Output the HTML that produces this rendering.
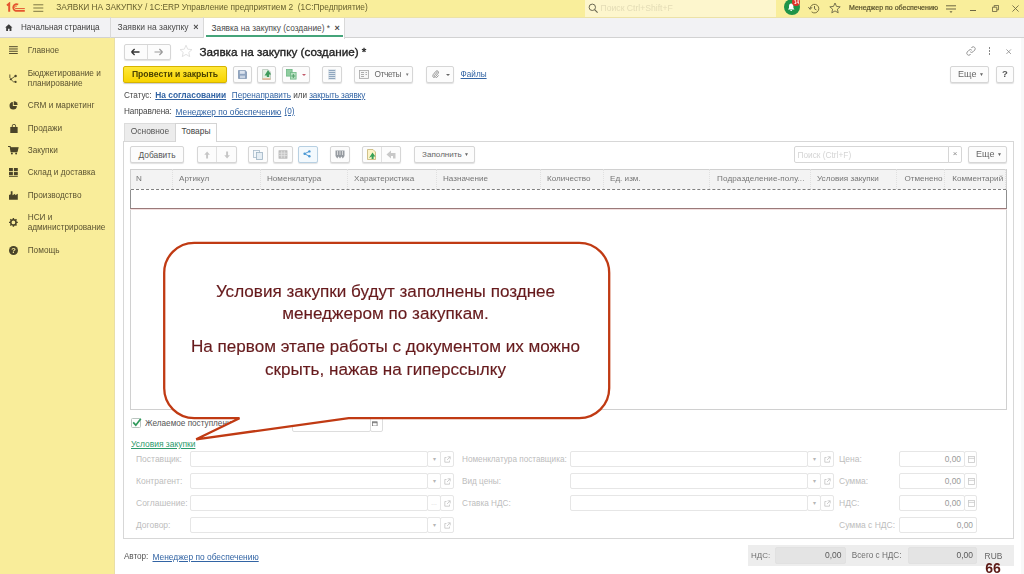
<!DOCTYPE html>
<html lang="ru">
<head>
<meta charset="utf-8">
<title>Заявка на закупку</title>
<style>
*{box-sizing:border-box;margin:0;padding:0}
html,body{width:1024px;height:574px;overflow:hidden;background:#fff}
body{font-family:"Liberation Sans",sans-serif;font-size:8.5px;color:#444;position:relative}
#ui{position:absolute;left:0;top:0;width:1024px;height:574px;filter:blur(0.45px)}
.a{position:absolute;white-space:nowrap;line-height:1}
.lnk{color:#3264a4;text-decoration:underline;text-underline-offset:0.6px;text-decoration-thickness:0.9px}
/* top bars */
#titlebar{left:0;top:0;width:1024px;height:17px;background:#f9ee9b}
#tabbar{left:0;top:17px;width:1024px;height:21.4px;background:#f2f2f4;border-bottom:1.3px solid #d2d2d2;border-top:1px solid #ece2a8}
#sidebar{left:0;top:38px;width:115px;height:536px;background:#f9ed9a}
#sideedge{left:114px;top:38px;width:1.3px;height:536px;background:#e9dfa6}
.sb{left:27.7px;color:#5b5331;font-size:8.25px;line-height:10.6px}
.tab{top:17px;height:21px;border-right:1px solid #d9d9d9;font-size:8.5px;color:#4a4a4a;line-height:21px}
.btn{border:1px solid #d6d6d6;border-radius:2px;background:#fcfcfc;box-shadow:0 1px 1px rgba(0,0,0,.12);height:16px;font-size:8.5px;color:#444;line-height:14px;text-align:center}
.fld{border:1px solid #e6e6e6;border-radius:2px;background:#fff;height:16px}
.dl{color:#bdbdbd;font-size:8.5px}
.th{top:169px;height:20px;line-height:20.5px;font-size:8.1px;color:#757575;padding-left:4px;border-right:1px dotted #e0e0e0}
</style>
</head>
<body>
<div id="ui">
<!-- TITLE BAR -->
<div class="a" id="titlebar"></div>
<div class="a" id="tabbar"></div>
<div class="a" id="sidebar"></div>
<div class="a" id="sideedge"></div>
<div class="a" style="left:1020.5px;top:38px;width:4px;height:536px;background:#f8f8f8"></div>
<!-- titlebar content -->
<svg class="a" style="left:6px;top:2px" width="20" height="11" viewBox="0 0 20 11"><g fill="none" stroke="#e4552f"><path d="M1 3.4L3.2 1.6V9.8" stroke-width="2"/><path d="M12.2 2.6A3.4 3.4 0 1 0 9.8 8.9H18.8" stroke-width="1.7"/><path d="M11 4.6A1.3 1.3 0 1 0 9.8 6.6H18.8" stroke-width="1"/></g></svg>
<svg class="a" style="left:33px;top:4px" width="11" height="9" viewBox="0 0 11 9"><g stroke="#7d7644" stroke-width="1"><path d="M0.3 0.8H10.3M0.3 4H10.3M0.3 7.3H10.3"/></g></svg>
<div class="a" style="left:56.2px;top:3.1px;font-size:8.35px;color:#68612f">ЗАЯВКИ НА ЗАКУПКУ / 1С:ERP Управление предприятием 2&nbsp; (1С:Предприятие)</div>
<div class="a" style="left:585px;top:0;width:191px;height:17px;background:#fdf6cd"></div>
<svg class="a" style="left:588px;top:3px" width="11" height="11" viewBox="0 0 11 11"><circle cx="4.3" cy="4.3" r="3.2" fill="none" stroke="#6a6752" stroke-width="1"/><path d="M6.6 6.6L9.6 9.6" stroke="#6a6752" stroke-width="1.2"/></svg>
<div class="a" style="left:600.5px;top:4.2px;font-size:8.65px;color:#e3dcb6">Поиск Ctrl+Shift+F</div>
<div class="a" style="left:783.6px;top:-1.2px;width:16.4px;height:16.4px;border-radius:8.2px;background:#1f9448"></div>
<svg class="a" style="left:787.2px;top:3.4px" width="8.4" height="8.6" viewBox="0 0 10 11"><path d="M5 0.5C3 0.5 2.2 2.2 2.2 4V6.4L0.8 8.2H9.2L7.8 6.4V4C7.8 2.2 7 0.5 5 0.5Z M3.8 9H6.2A1.2 1.2 0 0 1 3.8 9Z" fill="#fff"/></svg>
<div class="a" style="left:792.3px;top:-2.4px;width:8.2px;height:8.2px;border-radius:4.1px;background:#e2332c;color:#fff;font-size:4.5px;line-height:9px;text-align:center;font-weight:bold">14</div>
<svg class="a" style="left:808.3px;top:2.6px" width="12" height="11" viewBox="0 0 12 11"><path d="M2.2 5.5A4.3 4.3 0 1 1 3.6 8.8" fill="none" stroke="#7d7542" stroke-width="1"/><path d="M0.4 4.2L2.2 6.4L4 4.2" fill="none" stroke="#6b6647" stroke-width="1"/><path d="M6.5 3V5.8L8.4 6.9" fill="none" stroke="#6b6647" stroke-width="1"/></svg>
<svg class="a" style="left:829px;top:2px" width="12" height="12" viewBox="0 0 12 12"><path d="M6 1L7.5 4.4L11.2 4.8L8.4 7.2L9.2 10.8L6 8.9L2.8 10.8L3.6 7.2L0.8 4.8L4.5 4.4Z" fill="none" stroke="#6b6647" stroke-width="0.9"/></svg>
<div class="a" style="left:848.5px;top:3.9px;font-size:7.6px;color:#544d28;-webkit-text-stroke:0.2px #544d28;transform:scaleX(0.925);transform-origin:0 0">Менеджер по обеспечению</div>
<svg class="a" style="left:945.5px;top:5px" width="11" height="9" viewBox="0 0 11 9"><g stroke="#6d6744" stroke-width="1"><path d="M0 0.8H10M0 4H10"/></g><path d="M3.5 6.3H6.5L5 8Z" fill="#6d6744"/></svg>
<div class="a" style="left:970px;top:10px;width:6px;height:1px;background:#6d6744"></div>
<svg class="a" style="left:991.5px;top:4.5px" width="7" height="7" viewBox="0 0 8 8"><path d="M0.5 2.5H5.5V7.5H0.5Z M2.5 2.5V0.5H7.5V5.5H5.5" fill="none" stroke="#6d6744" stroke-width="1"/></svg>
<svg class="a" style="left:1012px;top:4.5px" width="7" height="7" viewBox="0 0 8 8"><path d="M0.5 0.5L7.5 7.5M7.5 0.5L0.5 7.5" stroke="#6d6744" stroke-width="1"/></svg>

<!-- tabs -->
<div class="a tab" style="left:0;width:111px;padding-left:21px;font-size:8.15px;color:#404040;top:17.4px">Начальная страница</div>
<svg class="a" style="left:5.3px;top:23.5px" width="7.6" height="7.3" viewBox="0 0 9 9" preserveAspectRatio="none"><path d="M4.5 0.3L0.2 4.4H1.4V8.6H3.6V5.8H5.4V8.6H7.6V4.4H8.8Z" fill="#3c3c3c"/></svg>
<div class="a tab" style="left:110px;width:94px;padding-left:7.5px">Заявки на закупку &nbsp;<b style="font-size:9px">×</b></div>
<div class="a tab" style="left:204px;width:140.5px;padding-left:7.5px;background:#fff;height:21.4px;line-height:21px;font-size:8.3px;top:17.6px">Заявка на закупку (создание) * &nbsp;<b style="font-size:9px">×</b></div><div class="a" style="left:206px;top:35px;width:137px;height:1.7px;background:#45a47a"></div>

<!-- sidebar items -->
<svg class="a" style="left:9.2px;top:46.3px" width="8.8" height="7.9" viewBox="0 0 10 9"><path d="M0 0.8H10M0 3.4H10M0 6H10M0 8.6H10" stroke="#4a4429" stroke-width="1.1"/></svg>
<div class="a sb" style="top:46.2px">Главное</div>
<svg class="a" style="left:9.3px;top:73.5px" width="9.7" height="9.7" viewBox="0 0 11 11"><g fill="#4a4429"><circle cx="7.5" cy="2.2" r="1.4"/><circle cx="2" cy="6" r="1.2"/><circle cx="7.5" cy="9" r="1.2"/><rect x="0.5" y="0.5" width="1" height="4"/></g><path d="M2 6L7.5 2.2M2 6L5 8.8H7.5" stroke="#4a4429" stroke-width="0.9" fill="none"/></svg>
<div class="a sb" style="top:68.7px">Бюджетирование и<br>планирование</div>
<svg class="a" style="left:9.2px;top:101.2px" width="8.8" height="8.8" viewBox="0 0 10 10"><path d="M4.4 1.2A4.2 4.2 0 1 0 9 5.6H4.4Z" fill="#4a4429"/><path d="M5.4 0.2A4.2 4.2 0 0 1 9.8 4.6H5.4Z" fill="#4a4429"/></svg>
<div class="a sb" style="top:100.9px">CRM и маркетинг</div>
<svg class="a" style="left:10.1px;top:123.5px" width="7.9" height="9.7" viewBox="0 0 9 11"><path d="M0.3 3.4H8.7V10.7H0.3Z" fill="#4a4429"/><path d="M2.6 4.4V2.2A1.9 1.9 0 0 1 6.4 2.2V4.4" fill="none" stroke="#4a4429" stroke-width="1"/></svg>
<div class="a sb" style="top:123.7px">Продажи</div>
<svg class="a" style="left:8.3px;top:146.4px" width="10.6" height="8.8" viewBox="0 0 12 10"><path d="M0 0.6H2.4L3.4 6.4H10.2L11.4 2H3" fill="none" stroke="#4a4429" stroke-width="1.2"/><path d="M3 2H11.4L10.2 6.4H3.6Z" fill="#4a4429"/><circle cx="4.4" cy="8.6" r="1.1" fill="#4a4429"/><circle cx="9.2" cy="8.6" r="1.1" fill="#4a4429"/></svg>
<div class="a sb" style="top:145.7px">Закупки</div>
<svg class="a" style="left:9.2px;top:168.4px" width="8.8" height="8.8" viewBox="0 0 10 10"><g fill="#4a4429"><rect x="0" y="0" width="4.4" height="3.6"/><rect x="5.6" y="0" width="4.4" height="3.6"/><rect x="0" y="4.6" width="4.4" height="3.6"/><rect x="5.6" y="4.6" width="4.4" height="3.6"/><rect x="0" y="9" width="10" height="1"/></g></svg>
<div class="a sb" style="top:168.2px">Склад и доставка</div>
<svg class="a" style="left:9.2px;top:191.4px" width="8.8" height="8.8" viewBox="0 0 10 10"><path d="M0 10V4.6L2 3.6V0.4H4V4.8L7 3V4.8L10 3V10Z" fill="#4a4429"/></svg>
<div class="a sb" style="top:190.7px">Производство</div>
<svg class="a" style="left:9.2px;top:218.4px" width="8.8" height="8.8" viewBox="0 0 10 10"><circle cx="5" cy="5" r="3" fill="none" stroke="#4a4429" stroke-width="1.8"/><g stroke="#4a4429" stroke-width="1.6"><path d="M5 0V2M5 8V10M0 5H2M8 5H10M1.5 1.5L2.8 2.8M7.2 7.2L8.5 8.5M8.5 1.5L7.2 2.8M2.8 7.2L1.5 8.5"/></g></svg>
<div class="a sb" style="top:212.7px">НСИ и<br>администрирование</div>
<div class="a" style="left:9px;top:246.2px;width:9px;height:9px;border-radius:4.5px;background:#4a4429;color:#f9ec9a;font-size:7.5px;font-weight:bold;text-align:center;line-height:9.4px">?</div>
<div class="a sb" style="top:245.7px">Помощь</div>

<!-- form header -->
<div class="a btn" style="left:124px;top:44px;width:47px;height:16px"></div>
<div class="a" style="left:147px;top:45px;width:1px;height:14px;background:#dcdcdc"></div>
<svg class="a" style="left:131px;top:48px" width="9" height="8" viewBox="0 0 9 8"><path d="M0.5 4H8.5M0.5 4L3.6 1M0.5 4L3.6 7" stroke="#333" stroke-width="1.3" fill="none"/></svg>
<svg class="a" style="left:154px;top:48px" width="9" height="8" viewBox="0 0 9 8"><path d="M0.5 4H8.5M8.5 4L5.4 1M8.5 4L5.4 7" stroke="#9a9a9a" stroke-width="1.2" fill="none"/></svg>
<svg class="a" style="left:179px;top:44px" width="14" height="14" viewBox="0 0 14 14"><path d="M7 1.2L8.7 5.2L13 5.6L9.8 8.4L10.7 12.6L7 10.4L3.3 12.6L4.2 8.4L1 5.6L5.3 5.2Z" fill="none" stroke="#dedede" stroke-width="0.9"/></svg>
<div class="a" style="left:199.5px;top:45.6px;font-size:11.7px;color:#222;-webkit-text-stroke:0.35px #222">Заявка на закупку (создание) *</div>
<!-- header right icons -->
<svg class="a" style="left:965.5px;top:46px" width="10" height="10" viewBox="0 0 10 10"><g fill="none" stroke="#8a8a8a" stroke-width="0.9"><path d="M4.2 5.8A2 2 0 0 0 7 5.8L8.8 4A2 2 0 0 0 6 1.2L5.2 2"/><path d="M5.8 4.2A2 2 0 0 0 3 4.2L1.2 6A2 2 0 0 0 4 8.8L4.8 8"/></g></svg>
<div class="a" style="left:988.8px;top:47.2px;width:1.6px;height:1.8px;background:#888;box-shadow:0 3px 0 #888,0 6px 0 #888"></div>
<svg class="a" style="left:1006.3px;top:48.5px" width="5.4" height="5.4" viewBox="0 0 6 6"><path d="M0.5 0.5L5.5 5.5M5.5 0.5L0.5 5.5" stroke="#8a8a8a" stroke-width="0.9"/></svg>
<!-- toolbar -->
<div class="a" style="left:123px;top:66px;width:104px;height:16.5px;border:1px solid #d6b400;border-radius:2px;background:linear-gradient(#ffe83a,#f8d400);box-shadow:0 1px 1px rgba(0,0,0,.2);font-size:8.6px;font-weight:bold;color:#4a4200;text-align:center;line-height:14.5px">Провести и закрыть</div>
<div class="a btn" style="left:233px;top:66px;width:19px;height:16.5px"></div>
<svg class="a" style="left:238px;top:70px" width="9" height="9" viewBox="0 0 9 9"><path d="M0.5 0.5H7.2L8.5 1.8V8.5H0.5Z" fill="#8fa4c0" stroke="#8296b2" stroke-width="0.8"/><rect x="1.8" y="0.8" width="5" height="3" fill="#dbe3ee"/><rect x="2" y="5.6" width="5" height="2.6" fill="#c9d4e3"/></svg>
<div class="a btn" style="left:257px;top:66px;width:19px;height:16.5px"></div>
<svg class="a" style="left:261px;top:69px" width="11" height="11" viewBox="0 0 11 11"><path d="M1.5 0.5H7L9.5 3V10.5H1.5Z" fill="#e2f0e2" stroke="#b9c9bd" stroke-width="0.8"/><path d="M1.5 9.4H9.5V10.5H1.5Z" fill="#eea57a"/><path d="M3.6 6.4L7 1L10.2 5.4H8.2V8H5.8V6.4Z" fill="#3f9b5c"/></svg>
<div class="a btn" style="left:282px;top:66px;width:28px;height:16.5px"></div>
<svg class="a" style="left:286px;top:69px" width="12" height="11" viewBox="0 0 12 11"><rect x="0.5" y="0.5" width="5.6" height="6.6" fill="#8fcc9f" stroke="#6db884" stroke-width="0.8"/><rect x="4.5" y="3.5" width="5.6" height="6.6" fill="#b5dfbf" stroke="#6db884" stroke-width="0.8"/><path d="M7.3 5V9M5.3 7H9.3" stroke="#4f9f68" stroke-width="1"/></svg>
<div class="a" style="left:302px;top:74px;border:2px solid transparent;border-top:2.2px solid #c25a6a;width:0;height:0"></div>
<div class="a btn" style="left:322px;top:66px;width:20px;height:16.5px"></div>
<svg class="a" style="left:328px;top:69px" width="8" height="11" viewBox="0 0 8 11"><rect x="0.5" y="0.5" width="7" height="10" fill="#f4f7fa" stroke="#dfe5ea" stroke-width="0.8"/><path d="M0.8 1.6H7.2M0.8 3.6H7.2M0.8 5.6H7.2M0.8 7.6H7.2M0.8 9.5H7.2" stroke="#8fa6be" stroke-width="1.1"/></svg>
<div class="a btn" style="left:354px;top:66px;width:59px;height:16.5px;text-align:left;padding-left:19.5px;color:#666;line-height:14.5px;font-size:8.3px;letter-spacing:-0.35px">Отчеты&nbsp; <span style="font-size:4.5px;position:relative;top:-1px;color:#777">▼</span></div>
<svg class="a" style="left:359px;top:70px" width="10" height="9" viewBox="0 0 10 9"><rect x="0.5" y="0.5" width="9" height="8" fill="#f6f6f6" stroke="#a5a5a5" stroke-width="0.8"/><path d="M2 2.5H5M2 4.5H5M2 6.5H5M6.5 2.5H8M6.5 4.5H8" stroke="#999" stroke-width="0.8"/></svg>
<div class="a btn" style="left:426px;top:66px;width:28px;height:16.5px"></div>
<svg class="a" style="left:432px;top:69.8px" width="7.2" height="8.4" viewBox="0 0 9 11"><path d="M6.8 2.6L3 7.2A1 1 0 0 0 4.6 8.4L8 4.2A2 2 0 0 0 5 1.6L1.4 6A3 3 0 0 0 6 9.8L8.4 7" fill="none" stroke="#8d8d8d" stroke-width="1.2"/></svg>
<div class="a" style="left:445.5px;top:74px;border:2px solid transparent;border-top:2.4px solid #666;width:0;height:0"></div>
<div class="a lnk" style="left:460.6px;top:70.8px;font-size:8.2px">Файлы</div>
<div class="a btn" style="left:949.5px;top:66px;width:39px;height:16.5px;line-height:14.5px;font-size:9px;color:#666;padding-left:4px">Еще <span style="font-size:5px;position:relative;top:-1px;color:#666">▼</span></div>
<div class="a btn" style="left:996px;top:66px;width:18px;height:16.5px;line-height:14.5px;font-size:9.5px;font-weight:bold;color:#555">?</div>
<!-- status rows -->
<div class="a" style="left:124px;top:91.5px;font-size:8.2px;color:#484848;letter-spacing:-0.1px">Статус:</div>
<div class="a lnk" style="left:155.2px;top:91.3px;font-size:8.4px;font-weight:bold">На согласовании</div>
<div class="a lnk" style="left:231.8px;top:91.5px;font-size:8.2px">Перенаправить</div>
<div class="a" style="left:293.2px;top:91.5px;font-size:8.2px;color:#484848">или</div>
<div class="a lnk" style="left:309.2px;top:91.5px;font-size:8.2px;letter-spacing:-0.1px">закрыть заявку</div>
<div class="a" style="left:124px;top:108.2px;font-size:8.2px;color:#484848;letter-spacing:-0.1px">Направлена:</div>
<div class="a lnk" style="left:175.5px;top:108.2px;font-size:8.35px">Менеджер по обеспечению</div>
<div class="a lnk" style="left:284.6px;top:108.2px;font-size:8.2px">(0)</div>
<!-- panel -->
<div class="a" style="left:124px;top:123.2px;width:52px;height:18.6px;background:#ececec;border:1px solid #dcdcdc;font-size:8.4px;color:#555;text-align:center;line-height:15.6px">Основное</div>
<div class="a" style="left:123px;top:141px;width:891px;height:398px;border:1px solid #d7d7d7;background:#fff"></div>
<div class="a" style="left:175px;top:123.2px;width:42px;height:18.8px;background:#fff;border:1px solid #d4d4d4;border-bottom:none;font-size:8.4px;color:#444;text-align:center;line-height:15.6px">Товары</div>
<!-- table toolbar -->
<div class="a btn" style="left:130px;top:146px;width:54px;height:17px;line-height:16.6px;font-size:8.4px;color:#555">Добавить</div>
<div class="a btn" style="left:197px;top:146px;width:40px;height:17px"></div>
<div class="a" style="left:216px;top:147px;width:1px;height:15px;background:#e0e0e0"></div>
<svg class="a" style="left:203.5px;top:150.5px" width="6.2" height="8" viewBox="0 0 7 9"><path d="M3.5 0.5L0.3 4.2H2.4V8.5H4.6V4.2H6.7Z" fill="#c6c6c6"/></svg>
<svg class="a" style="left:223.5px;top:150.5px" width="6.2" height="8" viewBox="0 0 7 9"><path d="M3.5 8.5L0.3 4.8H2.4V0.5H4.6V4.8H6.7Z" fill="#c6c6c6"/></svg>
<div class="a btn" style="left:248px;top:146px;width:20px;height:17px"></div>
<svg class="a" style="left:253px;top:150px" width="10" height="10" viewBox="0 0 10 10"><rect x="0.5" y="0.5" width="6" height="7" fill="#f3f7fa" stroke="#a9bccb" stroke-width="0.8"/><rect x="3.5" y="2.5" width="6" height="7" fill="#e6eef4" stroke="#9db3c4" stroke-width="0.8"/></svg>
<div class="a btn" style="left:273px;top:146px;width:20px;height:17px"></div>
<svg class="a" style="left:278px;top:150px" width="10" height="9" viewBox="0 0 10 9"><rect x="1" y="0.8" width="8" height="7.4" fill="#c4c4c4" stroke="#b4b4b4" stroke-width="0.8"/><path d="M1 3.2H9M1 5.6H9M3.7 0.8V8.2M6.3 0.8V8.2" stroke="#e8e8e8" stroke-width="0.7"/></svg>
<div class="a btn" style="left:298px;top:146px;width:20px;height:17px;background:#f3f9fd;border-color:#b8d0e2"></div>
<svg class="a" style="left:303.4px;top:150.4px" width="8" height="7.6" viewBox="0 0 10 9"><path d="M8 1.4L2 4.5L8 7.6" fill="none" stroke="#4a98d4" stroke-width="1.2"/><circle cx="8" cy="1.5" r="1.5" fill="#4a98d4"/><circle cx="2" cy="4.5" r="1.5" fill="#4a98d4"/><circle cx="8" cy="7.5" r="1.5" fill="#4a98d4"/></svg>
<div class="a btn" style="left:330px;top:146px;width:20px;height:17px"></div>
<svg class="a" style="left:335px;top:150px" width="10" height="9" viewBox="0 0 10 9"><path d="M0.5 0.5H9.5V6L7.8 8.5L6.4 6.4L5 8.5L3.6 6.4L2.2 8.5L0.5 6Z" fill="#969ba1"/><path d="M2.5 1V5M5 1V5M7.5 1V5" stroke="#e8e8e8" stroke-width="0.8"/></svg>
<div class="a btn" style="left:362px;top:146px;width:39px;height:17px"></div>
<div class="a" style="left:381px;top:147px;width:1px;height:15px;background:#e0e0e0"></div>
<svg class="a" style="left:366px;top:149px" width="11" height="11" viewBox="0 0 11 11"><path d="M1.5 0.5H7L9.5 3V10.5H1.5Z" fill="#fdf3c7" stroke="#c4b274" stroke-width="0.8"/><path d="M3 9L6.5 3.6L9.4 7.4H7.6V10H5.6V7.4Z" fill="#38a057"/></svg>
<svg class="a" style="left:386px;top:150px" width="10" height="9" viewBox="0 0 10 9"><path d="M0.5 4.5L5 0.5V3H9.5V8.5H7V6H5V8.5Z" fill="#c8c8c8"/></svg>
<div class="a btn" style="left:414px;top:146px;width:61px;height:17px;line-height:16.4px;font-size:8.1px;color:#666;padding-left:2px">Заполнить <span style="font-size:5px;position:relative;top:-1px;color:#666">▼</span></div>
<div class="a fld" style="left:794px;top:146px;width:155px;height:17px;border-color:#d6d6d6;border-radius:2px 0 0 2px"></div>
<div class="a" style="left:797.5px;top:150.5px;font-size:8.3px;color:#d4d4d4">Поиск (Ctrl+F)</div>
<div class="a fld" style="left:948px;top:146px;width:14px;height:17px;border-color:#d6d6d6;border-radius:0 2px 2px 0;font-size:8px;color:#888;text-align:center;line-height:14px">×</div>
<div class="a btn" style="left:967.5px;top:146px;width:39px;height:17px;line-height:15px;font-size:9px;color:#666;padding-left:4px">Еще <span style="font-size:5px;position:relative;top:-1px;color:#666">▼</span></div>
<!-- table -->
<div class="a" style="left:130px;top:168.6px;width:877px;height:241.4px;border:1px solid #d0d0d0;background:#fff"></div>
<div class="a" style="left:131px;top:169.6px;width:875px;height:19.4px;background:#f3f3f3"></div>
<div class="a th" style="left:130px;width:43px;padding-left:6px">N</div><div class="a th" style="left:173px;width:88px;padding-left:6px">Артикул</div><div class="a th" style="left:261px;width:87px;padding-left:6px">Номенклатура</div><div class="a th" style="left:348px;width:89px;padding-left:6px">Характеристика</div><div class="a th" style="left:437px;width:104px;padding-left:6px">Назначение</div><div class="a th" style="left:541px;width:63px;padding-left:6px">Количество</div><div class="a th" style="left:604px;width:106px;padding-left:6px">Ед. изм.</div><div class="a th" style="left:710px;width:101px;padding-left:7px;letter-spacing:0.12px">Подразделение-полу...</div><div class="a th" style="left:811px;width:86px;padding-left:6px">Условия закупки</div><div class="a th" style="left:897px;width:48px;padding-left:7.5px">Отменено</div><div class="a th" style="left:945px;width:61px;padding-left:7.2px">Комментарий</div>
<div class="a" style="left:131px;top:188.7px;width:875px;height:0;border-top:1px dashed #808080"></div>
<div class="a" style="left:130px;top:189.5px;width:877px;height:19.3px;border:1px solid #8f8f8f;border-top:none;border-bottom:1px solid #9a7a7a;background:#fff;box-shadow:0 1px 0 #f3dede"></div>

<!-- bottom fields -->
<div class="a" style="left:131px;top:418px;width:10px;height:10px;border:1px solid #b9c4bf;border-radius:1.5px;background:#fff"></div>
<svg class="a" style="left:132px;top:418px" width="10" height="9" viewBox="0 0 10 9"><path d="M1.2 4.4L3.8 7.2L8.8 0.8" fill="none" stroke="#2f9a5b" stroke-width="1.7"/></svg>
<div class="a" style="left:145px;top:419.7px;font-size:8.2px;color:#555">Желаемое поступление:</div>
<div class="a fld" style="left:292px;top:416px;width:79px;height:16px;border-color:#ddd"></div>
<div class="a fld" style="left:370px;top:416px;width:13px;height:16px;border-color:#ddd"></div>
<svg class="a" style="left:372.3px;top:420.6px" width="5.6" height="5.4" viewBox="0 0 7 7"><rect x="0.5" y="1" width="6" height="5.5" fill="#fff" stroke="#666" stroke-width="0.9"/><path d="M0.5 2.2H6.5" stroke="#666" stroke-width="1.2"/></svg>
<div class="a" style="left:131px;top:440px;font-size:8.45px;color:#2b9a6b;text-decoration:underline;text-underline-offset:0.6px;text-decoration-thickness:0.9px">Условия закупки</div>
<div class="a dl" style="left:136px;top:455px">Поставщик:</div><div class="a fld" style="left:190px;top:451px;width:238px"></div><div class="a fld" style="left:427px;top:451px;width:14px;color:#b5b5b5;font-size:6px;text-align:center;line-height:14px">▾</div><div class="a fld" style="left:440px;top:451px;width:14px"><svg width="7" height="7" viewBox="0 0 7 7" style="position:absolute;left:3px;top:4px"><path d="M2.5 1.5H0.8V6.2H5.5V4.5M3.6 0.8H6.2V3.4M6.2 0.8L3 4" fill="none" stroke="#c4c4c4" stroke-width="0.8"/></svg></div>
<div class="a dl" style="left:462px;top:455.5px;font-size:8.2px">Номенклатура поставщика:</div><div class="a fld" style="left:570px;top:451px;width:238px"></div><div class="a fld" style="left:807px;top:451px;width:14px;color:#b5b5b5;font-size:6px;text-align:center;line-height:14px">▾</div><div class="a fld" style="left:820px;top:451px;width:14px"><svg width="7" height="7" viewBox="0 0 7 7" style="position:absolute;left:3px;top:4px"><path d="M2.5 1.5H0.8V6.2H5.5V4.5M3.6 0.8H6.2V3.4M6.2 0.8L3 4" fill="none" stroke="#c4c4c4" stroke-width="0.8"/></svg></div>
<div class="a dl" style="left:839px;top:455px">Цена:</div><div class="a fld" style="left:899px;top:451px;width:66px;text-align:right;padding-right:3px;font-size:8.4px;color:#9a9a9a;line-height:14px">0,00</div><div class="a fld" style="left:964px;top:451px;width:13px"><svg width="7" height="7" viewBox="0 0 7 7" style="position:absolute;left:3px;top:4px"><rect x="0.5" y="0.5" width="6" height="6" fill="none" stroke="#c9c9c9" stroke-width="0.8"/><path d="M0.5 2.4H6.5" stroke="#c9c9c9" stroke-width="0.8"/></svg></div>
<div class="a dl" style="left:136px;top:477px">Контрагент:</div><div class="a fld" style="left:190px;top:473px;width:238px"></div><div class="a fld" style="left:427px;top:473px;width:14px;color:#b5b5b5;font-size:6px;text-align:center;line-height:14px">▾</div><div class="a fld" style="left:440px;top:473px;width:14px"><svg width="7" height="7" viewBox="0 0 7 7" style="position:absolute;left:3px;top:4px"><path d="M2.5 1.5H0.8V6.2H5.5V4.5M3.6 0.8H6.2V3.4M6.2 0.8L3 4" fill="none" stroke="#c4c4c4" stroke-width="0.8"/></svg></div>
<div class="a dl" style="left:462px;top:477.5px;font-size:8.2px">Вид цены:</div><div class="a fld" style="left:570px;top:473px;width:238px"></div><div class="a fld" style="left:807px;top:473px;width:14px;color:#b5b5b5;font-size:6px;text-align:center;line-height:14px">▾</div><div class="a fld" style="left:820px;top:473px;width:14px"><svg width="7" height="7" viewBox="0 0 7 7" style="position:absolute;left:3px;top:4px"><path d="M2.5 1.5H0.8V6.2H5.5V4.5M3.6 0.8H6.2V3.4M6.2 0.8L3 4" fill="none" stroke="#c4c4c4" stroke-width="0.8"/></svg></div>
<div class="a dl" style="left:839px;top:477px">Сумма:</div><div class="a fld" style="left:899px;top:473px;width:66px;text-align:right;padding-right:3px;font-size:8.4px;color:#9a9a9a;line-height:14px">0,00</div><div class="a fld" style="left:964px;top:473px;width:13px"><svg width="7" height="7" viewBox="0 0 7 7" style="position:absolute;left:3px;top:4px"><rect x="0.5" y="0.5" width="6" height="6" fill="none" stroke="#c9c9c9" stroke-width="0.8"/><path d="M0.5 2.4H6.5" stroke="#c9c9c9" stroke-width="0.8"/></svg></div>
<div class="a dl" style="left:136px;top:499px">Соглашение:</div><div class="a fld" style="left:190px;top:495px;width:238px"></div><div class="a fld" style="left:427px;top:495px;width:14px;color:#b5b5b5;font-size:6px;text-align:center;line-height:14px">…</div><div class="a fld" style="left:440px;top:495px;width:14px"><svg width="7" height="7" viewBox="0 0 7 7" style="position:absolute;left:3px;top:4px"><path d="M2.5 1.5H0.8V6.2H5.5V4.5M3.6 0.8H6.2V3.4M6.2 0.8L3 4" fill="none" stroke="#c4c4c4" stroke-width="0.8"/></svg></div>
<div class="a dl" style="left:462px;top:499.5px;font-size:8.2px">Ставка НДС:</div><div class="a fld" style="left:570px;top:495px;width:238px"></div><div class="a fld" style="left:807px;top:495px;width:14px;color:#b5b5b5;font-size:6px;text-align:center;line-height:14px">▾</div><div class="a fld" style="left:820px;top:495px;width:14px"><svg width="7" height="7" viewBox="0 0 7 7" style="position:absolute;left:3px;top:4px"><path d="M2.5 1.5H0.8V6.2H5.5V4.5M3.6 0.8H6.2V3.4M6.2 0.8L3 4" fill="none" stroke="#c4c4c4" stroke-width="0.8"/></svg></div>
<div class="a dl" style="left:839px;top:499px">НДС:</div><div class="a fld" style="left:899px;top:495px;width:66px;text-align:right;padding-right:3px;font-size:8.4px;color:#9a9a9a;line-height:14px">0,00</div><div class="a fld" style="left:964px;top:495px;width:13px"><svg width="7" height="7" viewBox="0 0 7 7" style="position:absolute;left:3px;top:4px"><rect x="0.5" y="0.5" width="6" height="6" fill="none" stroke="#c9c9c9" stroke-width="0.8"/><path d="M0.5 2.4H6.5" stroke="#c9c9c9" stroke-width="0.8"/></svg></div>
<div class="a dl" style="left:136px;top:521px">Договор:</div><div class="a fld" style="left:190px;top:517px;width:238px"></div><div class="a fld" style="left:427px;top:517px;width:14px;color:#b5b5b5;font-size:6px;text-align:center;line-height:14px">▾</div><div class="a fld" style="left:440px;top:517px;width:14px"><svg width="7" height="7" viewBox="0 0 7 7" style="position:absolute;left:3px;top:4px"><path d="M2.5 1.5H0.8V6.2H5.5V4.5M3.6 0.8H6.2V3.4M6.2 0.8L3 4" fill="none" stroke="#c4c4c4" stroke-width="0.8"/></svg></div>
<div class="a dl" style="left:839px;top:521px">Сумма с НДС:</div><div class="a fld" style="left:899px;top:517px;width:78px;text-align:right;padding-right:3px;font-size:8.4px;color:#9a9a9a;line-height:14px">0,00</div>
<div class="a" style="left:124px;top:553.1px;font-size:8.2px;color:#555;letter-spacing:-0.1px">Автор:</div><div class="a lnk" style="left:152.5px;top:553px;font-size:8.4px">Менеджер по обеспечению</div>
<div class="a" style="left:748px;top:545.3px;width:266px;height:20.8px;background:#ededed"></div>
<div class="a" style="left:751px;top:551.5px;font-size:8px;color:#707070">НДС:</div>
<div class="a" style="left:775px;top:547px;width:70.5px;height:17px;background:#e4e4e4;border:1px solid #e1e1e1;border-radius:2px;text-align:right;padding-right:3px;font-size:8.5px;color:#5a5a5a;line-height:15px">0,00</div>
<div class="a" style="left:851.8px;top:551.5px;font-size:8.2px;color:#707070">Всего с НДС:</div>
<div class="a" style="left:907.5px;top:547px;width:69.5px;height:17px;background:#e4e4e4;border:1px solid #e1e1e1;border-radius:2px;text-align:right;padding-right:3px;font-size:8.5px;color:#5a5a5a;line-height:15px">0,00</div>
<div class="a" style="left:984.6px;top:552px;font-size:8.4px;color:#666">RUB</div>

</div>
<!-- callout -->
<div class="a" style="left:985.3px;top:561.3px;font-size:14px;font-weight:bold;color:#5c1a16">66</div>

<svg class="a" style="left:0;top:0" width="1024" height="574" viewBox="0 0 1024 574">
<path d="M194.2 242.8 H579.2 A30 30 0 0 1 609.2 272.8 V388.2 A30 30 0 0 1 579.2 418.2 H348.7 L196.2 439.3 L239.5 418.2 H194.2 A30 30 0 0 1 164.2 388.2 V272.8 A30 30 0 0 1 194.2 242.8 Z" fill="#fff" stroke="#c03a13" stroke-width="2.3" stroke-linejoin="miter"/>
</svg>
<div class="a" style="left:163px;top:281px;width:445px;text-align:center;font-size:17.1px;line-height:22.4px;color:#661a1c;-webkit-text-stroke:0.15px #661a1c;white-space:normal">Условия закупки будут заполнены позднее<br>менеджером по закупкам.<div style="height:10.6px"></div>На первом этапе работы с документом их можно<br>скрыть, нажав на гиперссылку</div>
</body>
</html>
